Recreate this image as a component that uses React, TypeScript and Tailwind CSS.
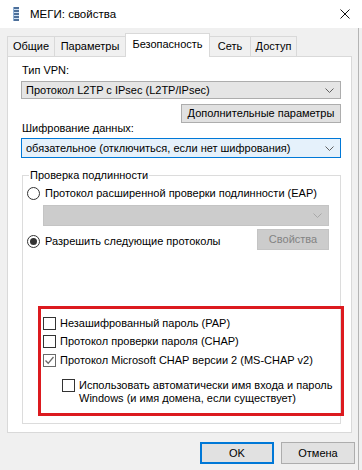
import React from "react";

const Chevron = ({ color = "#606060" }: { color?: string }) => (
  <svg width="9" height="5" viewBox="0 0 9 5">
    <path d="M0.5 0.5 L4.5 4.5 L8.5 0.5" fill="none" stroke={color} strokeWidth="1" />
  </svg>
);

const Checkbox = ({ checked = false }: { checked?: boolean }) => (
  <div className={`w-[13px] h-[13px] shrink-0 border bg-white flex items-center justify-center ${checked ? "border-[#6a6a6a]" : "border-[#333333]"}`}>
    {checked && (
      <svg width="11" height="11" viewBox="0 0 11 11">
        <path d="M1.5 5.5 L4.2 8.3 L9.5 2" fill="none" stroke="#6a6a6a" strokeWidth="1.3" />
      </svg>
    )}
  </div>
);

const Radio = ({ checked = false }: { checked?: boolean }) => (
  <div className="w-[13px] h-[13px] shrink-0 rounded-full border border-[#333333] bg-white flex items-center justify-center">
    {checked && <div className="w-[7px] h-[7px] rounded-full bg-[#333333]" />}
  </div>
);

export default function App() {
  return (
    <div className="w-[362px] h-[470px] bg-[#f0f0f0] flex flex-col overflow-hidden font-['Liberation_Sans',sans-serif] text-[11px] text-black leading-[15px]">
      {/* Title bar */}
      <div className="h-[28px] bg-white flex items-center shrink-0">
        <div className="ml-[13px] w-[6px] flex">
          <svg width="6" height="14" viewBox="0 0 6 14">
            <rect x="0" y="0" width="6" height="14" fill="#4d6f99" />
            <rect x="0" y="2" width="6" height="1" fill="#cfe0f2" />
            <rect x="0" y="5" width="6" height="1" fill="#cfe0f2" />
            <rect x="0" y="8" width="6" height="1" fill="#cfe0f2" />
            <rect x="0" y="11" width="6" height="1" fill="#cfe0f2" />
            <rect x="0" y="0" width="1" height="14" fill="#8fb0d6" />
          </svg>
        </div>
        <div className="ml-[11px] text-[11.5px]">МЕГИ: свойства</div>
        <div className="ml-auto mr-[12px] flex">
          <svg width="10" height="10" viewBox="0 0 10 10">
            <path d="M0.5 0.5 L9.5 9.5 M9.5 0.5 L0.5 9.5" stroke="#111" strokeWidth="1" />
          </svg>
        </div>
      </div>

      {/* Body */}
      <div className="flex-1 flex flex-col mr-[3px] border-r border-[#b4b4b4]">
        {/* Tabs */}
        <div className="mt-[5px] ml-[7px] h-[23px] flex items-end relative z-10">
          <div className="w-[47px] h-[20px] border-t border-l border-[#d9d9d9] bg-[#f0f0f0] flex items-center justify-center">Общие</div>
          <div className="w-[71px] h-[20px] border-t border-l border-[#d9d9d9] bg-[#f0f0f0] flex items-center justify-center">Параметры</div>
          <div className="w-[85px] h-[24px] -mb-px border-t border-l border-r border-[#d9d9d9] bg-white flex items-center justify-center pb-[2px]">Безопасность</div>
          <div className="w-[40px] h-[20px] border-t border-[#d9d9d9] bg-[#f0f0f0] flex items-center justify-center">Сеть</div>
          <div className="w-[47px] h-[20px] border-t border-l border-r border-[#d9d9d9] bg-[#f0f0f0] flex items-center justify-center">Доступ</div>
        </div>

        {/* Panel */}
        <div className="ml-[7px] w-[345px] h-[377px] border border-[#d9d9d9] bg-white flex flex-col">
          <div className="mt-[6px] ml-[14px]">Тип VPN:</div>
          <div className="mt-[3px] ml-[13px] w-[320px] h-[18px] bg-[#e5e5e5] border border-[#adadad] flex items-center pl-[4px] pr-[6px]">
            <span>Протокол L2TP с IPsec (L2TP/IPsec)</span>
            <span className="ml-auto flex"><Chevron /></span>
          </div>
          <div className="mt-[5px] ml-[173px] w-[160px] h-[19px] bg-[#e1e1e1] border border-[#adadad] flex items-center justify-center whitespace-nowrap">
            Дополнительные параметры
          </div>
          <div className="ml-[14px] leading-[13px] -mt-[1px]">Шифрование данных:</div>
          <div className="mt-[3px] ml-[13px] w-[320px] h-[20px] bg-[#e5f1fb] border border-[#0078d7] flex items-center pl-[4px] pr-[6px]">
            <span>обязательное (отключиться, если нет шифрования)</span>
            <span className="ml-auto flex"><Chevron /></span>
          </div>

          {/* Group box */}
          <div className="mt-[17px] ml-[14px] w-[319px] h-[249px] border border-[#dcdcdc] flex flex-col">
            <div className="-mt-[8px] ml-[6px] self-start bg-white px-[1px] leading-[15px]">Проверка подлинности</div>
            <div className="mt-[3px] ml-[4px] flex items-center h-[15px]">
              <Radio />
              <span className="ml-[5px] whitespace-nowrap">Протокол расширенной проверки подлинности (EAP)</span>
            </div>
            <div className="mt-[4px] ml-[20px] w-[286px] h-[21px] bg-[#cccccc] border border-[#c4c4c4] flex items-center pr-[6px]">
              <span className="ml-auto flex"><Chevron color="#a8a8a8" /></span>
            </div>
            <div className="mt-[3px] ml-[4px] flex items-start">
              <div className="mt-[5px] flex items-center h-[15px]">
                <Radio checked />
                <span className="ml-[5px]">Разрешить следующие протоколы</span>
              </div>
              <div className="ml-auto mr-[11px] w-[72px] h-[21px] bg-[#cccccc] border border-[#c4c4c4] flex items-center justify-center text-[#838383]">
                Свойства
              </div>
            </div>

            {/* Red annotation box */}
            <div className="mt-[56px] ml-[15px] -mr-[4px] h-[110px] border-[3px] border-[#dc1a1f] flex flex-col">
              <div className="mt-[5px] ml-[2px] h-[18px] flex items-center">
                <Checkbox />
                <span className="ml-[4px]">Незашифрованный пароль (PAP)</span>
              </div>
              <div className="ml-[2px] h-[18px] flex items-center">
                <Checkbox />
                <span className="ml-[4px]">Протокол проверки пароля (CHAP)</span>
              </div>
              <div className="mt-[1px] ml-[2px] h-[18px] flex items-center">
                <Checkbox checked />
                <span className="ml-[4px]">Протокол Microsoft CHAP версии 2 (MS-CHAP v2)</span>
              </div>
              <div className="mt-[10px] ml-[21px] flex items-start">
                <Checkbox />
                <div className="ml-[4px] leading-[12.5px]">
                  Использовать автоматически имя входа и пароль
                  <br />
                  Windows (и имя домена, если существует)
                </div>
              </div>
            </div>
          </div>
        </div>

        {/* Bottom buttons */}
        <div className="mt-[9px] ml-[200px] flex gap-[7px]">
          <div className="w-[74px] h-[22px] bg-[#e1e1e1] border-2 border-[#0078d7] flex items-center justify-center">OK</div>
          <div className="w-[74px] h-[22px] bg-[#e1e1e1] border border-[#adadad] flex items-center justify-center">Отмена</div>
        </div>
      </div>
    </div>
  );
}
